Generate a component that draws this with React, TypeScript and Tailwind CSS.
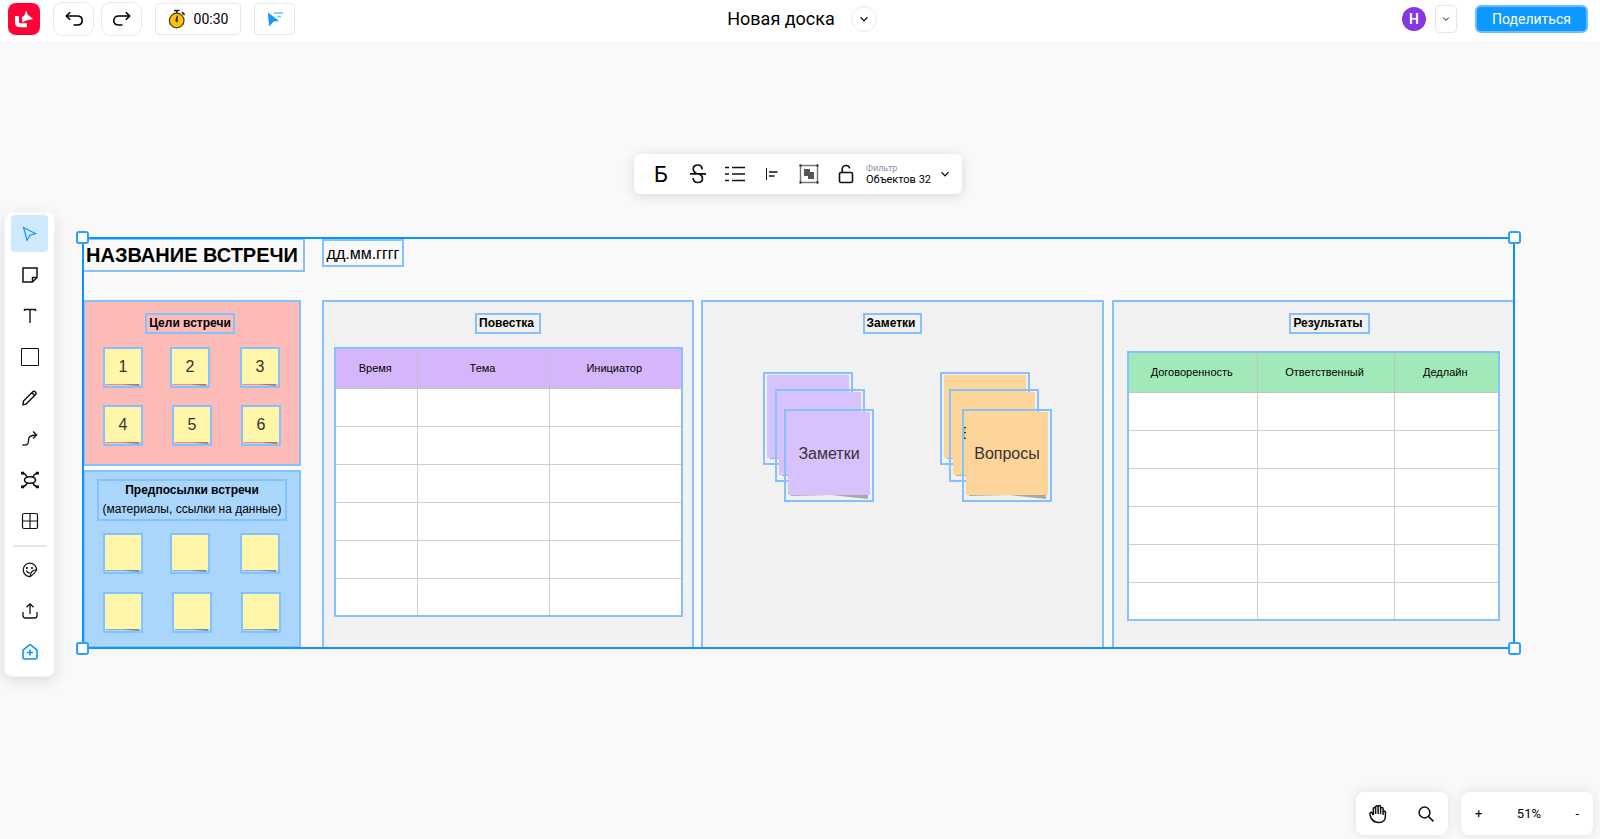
import { useState } from "react";
import type { ReactNode } from "react";

const App = () => {
  return (
    <div className="flex h-screen flex-col overflow-hidden bg-[#f9f9f9] font-[Roboto,sans-serif] text-black">
      <Header />
      <main className="relative flex-1">
        <Board />
        <FormatBar />
        <SideBar />
        <ZoomBar />
      </main>
    </div>
  );
};

const Chevron = ({ size = 10 }: { size?: number }) => (
  <svg
    width={size}
    height={size}
    viewBox="0 0 10 10"
    fill="none"
    stroke="currentColor"
    strokeWidth="1.2"
  >
    <path d="M1.5 3.2 5 6.8l3.5-3.6" />
  </svg>
);

const Header = () => {
  return (
    <header className="flex h-[41px] items-center justify-between bg-white pr-3 pb-[3px] pl-2">
      <div className="flex flex-1 items-center">
        <a href="#" aria-label="Главная">
          <svg width="32" height="32" viewBox="0 0 32 32">
            <rect width="32" height="32" rx="8" fill="#ff0236" />
            <path
              d="M7 13h4v5.500c0 1.200.6 1.800 1.800 1.800H19v3.900h-7.500C8.600 24.200 7 22.600 7 19.800Z"
              fill="#fff"
            />
            <path
              d="m18.200 7.300 1.400 4.300 5.500 4.500-7 1.300-3.600 2-.8-4.600 2.800-2.500Z"
              fill="#fff"
            />
          </svg>
        </a>
        <button
          aria-label="Отменить"
          className="ml-[13px] flex h-[34px] w-[41px] items-center justify-center rounded-[10px] border border-[#e8e8e8]"
        >
          <svg width="20" height="20" viewBox="0 0 20 20" fill="none" stroke="#000" strokeWidth="1.6">
            <path d="M6.200 3.200 2.300 7l3.900 3.800M2.500 7h10.700c3 0 5 1.800 5 4.500s-2 4.500-5 4.500H9.500" />
          </svg>
        </button>
        <button
          aria-label="Повторить"
          className="ml-[7px] flex h-[34px] w-[41px] items-center justify-center rounded-[10px] border border-[#e8e8e8]"
        >
          <svg width="20" height="20" viewBox="0 0 20 20" fill="none" stroke="#000" strokeWidth="1.6">
            <path d="M13.800 3.200 17.700 7l-3.900 3.800M17.500 7H6.800c-3 0-5 1.800-5 4.500s2 4.500 5 4.500h3.700" />
          </svg>
        </button>
        <button className="ml-[13px] flex h-8 w-[86px] items-center justify-center gap-2 rounded border border-[#e6e6e6] text-sm">
          <svg width="18" height="20" viewBox="0 0 18 20">
            <path d="M6 1.500h5.500M8.700 1.500V4M14 3.200l2.600 2.600" stroke="#222" strokeWidth="1.7" fill="none" />
            <circle cx="8.700" cy="11.500" r="7.300" fill="#fcbf0a" stroke="#4a3d10" strokeWidth="1.2" />
            <path d="M9.300 6.600v6.600l-1.700-1.400Z" fill="#222" stroke="#222" strokeWidth=".6" />
          </svg>
          00:30
        </button>
        <button
          aria-label="Курсоры"
          className="ml-[13px] flex h-8 w-[41px] items-center justify-center rounded border border-[#e6e6e6]"
        >
          <svg width="18" height="18" viewBox="0 0 18 18">
            <path d="M2 2.500 13 11l-5.400.6L3 16.500Z" fill="#0d99ff" />
            <path d="M8 3h9M11.500 6.500H15" stroke="#6cbcff" strokeWidth="1.3" />
          </svg>
        </button>
      </div>
      <div className="flex items-center gap-4 pl-2">
        <h1 className="text-lg">Новая доска</h1>
        <button
          aria-label="Меню доски"
          className="flex size-[26px] items-center justify-center rounded-full border border-[#e8e8e8]"
        >
          <Chevron />
        </button>
      </div>
      <div className="flex flex-1 items-center justify-end">
        <div className="flex size-6 items-center justify-center rounded-full bg-[#8338e0] text-sm font-semibold text-white">
          Н
        </div>
        <button
          aria-label="Участники"
          className="ml-[9px] flex h-7 w-[22px] items-center justify-center rounded border border-[#e6e6e6]"
        >
          <Chevron size={8} />
        </button>
        <button className="ml-[18px] h-7 w-[113px] rounded-md border-2 border-[#6cbcff] bg-[#0d99ff] text-sm text-white">
          Поделиться
        </button>
      </div>
    </header>
  );
};

const FormatBar = () => {
  return (
    <div className="absolute inset-x-0 top-[113px] flex justify-center pr-1">
      <div className="flex h-10 w-[328px] items-center rounded-md bg-white pr-3 pl-[15px] shadow-[0_2px_12px_rgba(0,0,0,0.14)]">
        <div className="flex flex-1 items-center justify-between">
          <button aria-label="Жирный" className="flex size-6 items-center justify-center text-[22px]">
            Б
          </button>
          <button aria-label="Зачёркнутый">
            <svg width="20" height="22" viewBox="0 0 20 22" fill="none" stroke="#111" strokeWidth="1.7">
              <path d="M14.200 6.500C14.200 3.700 12.500 2 9.700 2S5.200 3.700 5.200 6c0 2 1.200 3.500 3.500 4.800M2 10.800h16M11 11c2.300.9 3.500 2.200 3.500 4.200 0 2.400-1.800 4.300-4.600 4.300s-4.700-1.800-4.700-4.500" />
            </svg>
          </button>
          <button aria-label="Список">
            <svg width="22" height="18" viewBox="0 0 22 18" fill="none" stroke="#111" strokeWidth="1.5">
              <path d="M1 2.500h4M8 2.500h13M1 9h4M8 9h13M1 15.500h4M8 15.500h13" />
            </svg>
          </button>
          <button aria-label="Выравнивание" className="px-1">
            <svg width="14" height="14" viewBox="0 0 14 14" fill="none" stroke="#111">
              <path d="M1.500 1v12" />
              <path d="M4 5h8.500M4 9h5.500" strokeWidth="1.7" />
            </svg>
          </button>
          <button aria-label="Группировать">
            <svg width="20" height="20" viewBox="0 0 20 20">
              <path d="M1.500 1.500h17v17h-17Z" fill="none" stroke="#777" strokeWidth="1.4" />
              <path d="M5 5h6v3h4v7H9v-3H5Z" fill="#555" />
              <path d="M.5.500h2v2h-2ZM17.500.500h2v2h-2ZM.5 17.500h2v2h-2ZM17.500 17.500h2v2h-2Z" fill="#222" />
            </svg>
          </button>
          <button aria-label="Заблокировать" className="px-1">
            <svg width="16" height="20" viewBox="0 0 16 20" fill="none" stroke="#111" strokeWidth="1.6">
              <rect x="1.500" y="8.500" width="13" height="10" rx="1.500" />
              <path d="M4.200 8.500V5.300c0-2.300 1.500-3.800 3.800-3.800 2 0 3.300 1 3.700 2.800" />
            </svg>
          </button>
        </div>
        <button className="ml-2 flex items-center gap-[9px] text-left">
          <span className="text-[11px] leading-[11px]">
            <span className="block text-[9px] text-[#8e90a6]">Фильтр</span>
            Объектов 32
          </span>
          <Chevron />
        </button>
      </div>
    </div>
  );
};

const tools: { name: string; icon: ReactNode }[] = [
  { name: "Выбор", icon: <path d="m4.500 4.500 12 6-5.500 1.700L8 17.300Z" /> },
  {
    name: "Стикер",
    icon: (
      <>
        <path d="M4 4h14v9.500L13.500 18H4Z" strokeWidth="1.5" />
        <path d="M18 13.500h-4.500V18" strokeWidth="1.5" />
      </>
    ),
  },
  { name: "Текст", icon: <path d="M5.500 6V4.500h11V6M11 4.500V18" strokeWidth="1.4" /> },
  { name: "Фигура", icon: <path d="M2.500 2.500h17v17h-17Z" strokeWidth="1" /> },
  {
    name: "Карандаш",
    icon: (
      <path
        d="m4.500 14 9-9c1-1 2-1 2.900-.1s.9 1.900-.1 2.900l-9 9L4 17.800ZM12.800 5.700l2.900 2.900"
        strokeWidth="1.4"
      />
    ),
  },
  {
    name: "Стрелка",
    icon: (
      <path
        d="M3.500 17c5 .5 6-1 6-4.500S10.500 7.500 17.500 7M14 3.500 17.700 7 14 10.500"
        strokeWidth="1.3"
      />
    ),
  },
  {
    name: "Интеллект-карта",
    icon: (
      <>
        <ellipse cx="11" cy="11" rx="5.500" ry="3.300" strokeWidth="1.6" />
        <path
          d="M3 4.200c3 0 4 1.300 5.200 3.900M19 4.200c-3 0-4 1.300-5.200 3.900M3 17.800c3 0 4-1.300 5.200-3.900M19 17.800c-3 0-4-1.300-5.200-3.900"
          strokeWidth="1.5"
        />
        <path
          d="M2 2.800h3.200v2.600H2ZM16.800 2.800H20v2.600h-3.200ZM2 16.600h3.200v2.600H2ZM16.800 16.600H20v2.600h-3.200Z"
          fill="#111"
          stroke="none"
        />
      </>
    ),
  },
  {
    name: "Таблица",
    icon: (
      <>
        <rect x="3.500" y="3.500" width="15" height="15" rx="1.500" />
        <path d="M11 3.500v15M3.500 11h15" />
      </>
    ),
  },
];

const extraTools: { name: string; icon: ReactNode }[] = [
  {
    name: "Реакции",
    icon: (
      <>
        <path d="M17.600 10.500A6.700 6.700 0 1 0 11 17.600c1.200 0 6.600-5.500 6.600-7.100Z" strokeWidth="1.2" />
        <path d="M17.500 10.800c-4 0-6 1.800-6.300 6.500M7.300 11.500c.6 1.600 1.700 2.500 3.600 2.600" />
        <path d="M7.800 8v2M13 8v2" strokeWidth="1.6" />
      </>
    ),
  },
  {
    name: "Загрузить",
    icon: (
      <path
        d="M11 14V4M7.500 7.300 11 3.800l3.500 3.500M4 12v3.500C4 17 5 18 6.500 18h9c1.500 0 2.500-1 2.500-2.500V12"
        strokeWidth="1.3"
      />
    ),
  },
  {
    name: "Шаблоны",
    icon: (
      <g stroke="#0d8fff" strokeWidth="1.6">
        <path d="M4 9.200 11 3.500l7 5.700v7.300c0 1-.5 1.500-1.500 1.500h-11C4.500 18 4 17.500 4 16.500Z" />
        <path d="M11 8.500v6M8 11.500h6" />
      </g>
    ),
  },
];

const SideBar = () => {
  const [active, setActive] = useState("Выбор");
  const renderTool = (t: { name: string; icon: ReactNode }) => (
    <button
      key={t.name}
      aria-label={t.name}
      onClick={() => setActive(t.name)}
      className={`flex size-[37px] items-center justify-center rounded ${
        active === t.name ? "bg-[#cfe9ff] text-[#0d8fff]" : "text-[#111]"
      }`}
    >
      <svg width="22" height="22" viewBox="0 0 22 22" fill="none" stroke="currentColor" strokeWidth="1.2">
        {t.icon}
      </svg>
    </button>
  );
  return (
    <nav className="absolute top-[171px] left-1 flex flex-col items-center gap-1 rounded-lg border-3 border-white/60 bg-white bg-clip-padding px-1 pb-1 shadow-[0_4px_14px_rgba(0,0,0,0.12)]">
      {tools.map(renderTool)}
      <hr className="mt-[2px] h-[2px] w-[34px] border-0 bg-[#e6e6e6]" />
      {extraTools.map(renderTool)}
    </nav>
  );
};

const ZoomBar = () => {
  return (
    <div className="absolute right-[7px] bottom-1 flex gap-[13px]">
      <div className="flex h-[43px] w-[92px] items-center justify-between rounded-lg bg-white px-3 shadow-[0_0_12px_rgba(0,0,0,0.1)]">
        <button aria-label="Рука">
          <svg width="20" height="20" viewBox="0 0 20 20" fill="none" stroke="#111" strokeWidth="1.5">
            <path d="M5.300 11V4.500c0-1.500 2.300-1.500 2.300 0V3c0-1.600 2.500-1.600 2.500 0v-.3c0-1.500 2.500-1.500 2.500.3v1.500c0-1.500 2.500-1.500 2.500 0V8c0-1.400 2.300-1.400 2.300 0v4c0 4-2.400 6.500-6.400 6.500S4.700 16.800 3 14L1.900 10c-.4-1.600 1.500-2.200 2.300-.9l1.100 2M7.600 4v6M10.100 3v7M12.600 3v7M15.100 6v5" />
          </svg>
        </button>
        <button aria-label="Поиск">
          <svg width="20" height="20" viewBox="0 0 20 20" fill="none" stroke="#111" strokeWidth="1.5">
            <circle cx="8.500" cy="8.500" r="5.400" />
            <path d="m12.400 12.400 5 5" />
          </svg>
        </button>
      </div>
      <div className="flex h-[43px] w-[132px] items-center justify-between rounded-lg bg-white px-[14px] text-[13px] shadow-[0_0_12px_rgba(0,0,0,0.1)]">
        <button aria-label="Увеличить">+</button>
        <span>51%</span>
        <button aria-label="Уменьшить">-</button>
      </div>
    </div>
  );
};

const goalNotes = [
  { text: "1", pos: "left-[103px] top-[306px]" },
  { text: "2", pos: "left-[170px] top-[306px]" },
  { text: "3", pos: "left-[240px] top-[306px]" },
  { text: "4", pos: "left-[103px] top-[364px]" },
  { text: "5", pos: "left-[172px] top-[364px]" },
  { text: "6", pos: "left-[241px] top-[364px]" },
];

const sourceNotes = [
  { id: 1, pos: "left-[103px] top-[492px]" },
  { id: 2, pos: "left-[170px] top-[492px]" },
  { id: 3, pos: "left-[240px] top-[492px]" },
  { id: 4, pos: "left-[103px] top-[551px]" },
  { id: 5, pos: "left-[172px] top-[551px]" },
  { id: 6, pos: "left-[241px] top-[551px]" },
];

// listed from the bottom of each stack to the top
const bigNotes = [
  { id: 1, text: "", color: "bg-[#d8c2fe]", pos: "left-[763px] top-[331px]" },
  { id: 2, text: "", color: "bg-[#d8c2fe]", pos: "left-[775px] top-[348px]" },
  { id: 3, text: "Заметки", color: "bg-[#d8c2fe]", pos: "left-[784px] top-[368px]" },
  { id: 4, text: "", color: "bg-[#fed598]", pos: "left-[940px] top-[331px]" },
  { id: 5, text: "Вопросы", color: "bg-[#fed598]", pos: "left-[949px] top-[348px]" },
  { id: 6, text: "Вопросы", color: "bg-[#fed598]", pos: "left-[962px] top-[368px]" },
];

const Board = () => {
  return (
    <div className="absolute inset-0 font-['Liberation_Sans',sans-serif]">
      <h2 className="absolute top-[197px] left-[82px] h-[34px] w-[223px] border-2 border-[#84c1ff] pl-[2px] text-[20px] leading-[31px] font-bold whitespace-nowrap">
        НАЗВАНИЕ ВСТРЕЧИ
      </h2>
      <p className="absolute top-[198px] left-[322px] h-[28px] w-[82px] border-2 border-[#84c1ff] text-center text-base leading-[25px] whitespace-nowrap">
        дд.мм.гггг
      </p>

      <section className="absolute top-[259px] left-[83px] flex h-[166px] w-[218px] justify-center border-2 border-[#84c1ff] bg-[#fcbbb6] pt-[11px] pr-1">
        <BoxTitle text="Цели встречи" />
      </section>
      {goalNotes.map((n) => (
        <SmallNote key={n.text} pos={n.pos} text={n.text} />
      ))}

      <section className="absolute top-[429px] left-[83px] h-[178px] w-[218px] border-2 border-[#84c1ff] bg-[#a9d6fa] px-3 pt-[7px]">
        <p className="border-2 border-[#84c1ff] text-center text-xs leading-[19px] whitespace-nowrap">
          <b className="block">Предпосылки встречи</b>
          (материалы, ссылки на данные)
        </p>
      </section>
      {sourceNotes.map((n) => (
        <SmallNote key={n.id} pos={n.pos} />
      ))}

      <section className="absolute top-[259px] left-[322px] flex h-[349px] w-[372px] flex-col items-center border-2 border-[#84c1ff] bg-[#f1f1f1] pt-[11px]">
        <BoxTitle text="Повестка" trailing />
        <BoardTable
          heads={["Время", "Тема", "Инициатор"]}
          cols={["w-[82px]", "w-[132px]", "w-[131px]"]}
          color="bg-[#d5b6fb]"
          gap="mt-[13px]"
        />
      </section>

      <section className="absolute top-[259px] left-[701px] flex h-[349px] w-[403px] justify-center border-2 border-[#84c1ff] bg-[#f1f1f1] pt-[11px] pr-5">
        <BoxTitle text="Заметки" trailing />
      </section>
      {bigNotes.map((n) => (
        <div key={n.id} className={`absolute h-[93px] w-[90px] border-2 border-[#84c1ff] px-[2px] pt-px ${n.pos}`}>
          <div className={`flex h-[83px] items-center justify-center pt-px text-base text-[#333] ${n.color}`}>
            {n.text}
          </div>
          <svg className="ml-[3px]" width="77" height="4" viewBox="0 0 77 4">
            <path d="M0 0h77v4L40 0 0 1Z" fill="#a9a9a9" />
          </svg>
        </div>
      ))}

      <section className="absolute top-[259px] left-[1112px] flex h-[349px] w-[403px] flex-col items-center border-2 border-[#84c1ff] bg-[#f1f1f1] pt-[11px]">
        <BoxTitle text="Результаты" trailing wide />
        <BoardTable
          heads={["Договоренность", "Ответственный", "Дедлайн"]}
          cols={["w-[128px]", "w-[137px]", "w-[104px]"]}
          color="bg-[#a1e9b9]"
          gap="mt-[17px]"
        />
      </section>

      {/* selection frame */}
      <div className="pointer-events-none absolute top-[196px] left-[82px] h-[412px] w-[1433px] border-2 border-[#0d93ff]">
        <span className="absolute -top-2 -left-2 size-[13px] rounded-[3px] border-2 border-[#2f9eff] bg-white" />
        <span className="absolute -top-2 -right-2 size-[13px] rounded-[3px] border-2 border-[#2f9eff] bg-white" />
        <span className="absolute -bottom-2 -left-2 size-[13px] rounded-[3px] border-2 border-[#2f9eff] bg-white" />
        <span className="absolute -right-2 -bottom-2 size-[13px] rounded-[3px] border-2 border-[#2f9eff] bg-white" />
      </div>
    </div>
  );
};

const BoxTitle = ({
  text,
  trailing,
  wide,
}: {
  text: string;
  trailing?: boolean;
  wide?: boolean;
}) => (
  <h3
    className={`h-[21px] border-2 border-[#84c1ff] pl-[2px] text-xs leading-[17px] font-bold whitespace-nowrap ${
      trailing ? "pr-[5px]" : "pr-[2px]"
    } ${wide ? "ml-8" : ""}`}
  >
    {text}
  </h3>
);

const SmallNote = ({ pos, text }: { pos: string; text?: string }) => (
  <div className={`absolute h-[41px] w-10 border-2 border-[#84c1ff] ${pos}`}>
    <div className="flex h-[35px] items-center justify-center bg-[#fff6a9] pt-px text-base text-[#333]">
      {text}
    </div>
    <svg className="block" width="36" height="2" viewBox="0 0 36 2">
      <path d="M1 0h33v2L18 .5 1 .6Z" fill="#6b6b6b" opacity=".7" />
    </svg>
  </div>
);

const BoardTable = ({
  heads,
  cols,
  color,
  gap,
}: {
  heads: string[];
  cols: string[];
  color: string;
  gap: string;
}) => (
  <div className={`border-2 border-[#84c1ff] ${gap}`}>
    <table className="table-fixed border-collapse bg-white text-[11px]">
      <thead>
        <tr className={`h-[39px] ${color}`}>
          {heads.map((h, i) => (
            <th
              key={h}
              className={`border-r border-b border-[#c2c2c2] p-0 pr-[2px] font-normal last:border-r-0 ${cols[i]}`}
            >
              {h}
            </th>
          ))}
        </tr>
      </thead>
      <tbody>
        {[1, 2, 3, 4, 5, 6].map((r) => (
          <tr key={r} className="h-[38px] last:h-[37px] last:*:border-b-0">
            {heads.map((h) => (
              <td key={h} className="border-r border-b border-[#cfcfcf] p-0 last:border-r-0" />
            ))}
          </tr>
        ))}
      </tbody>
    </table>
  </div>
);

export default App;
